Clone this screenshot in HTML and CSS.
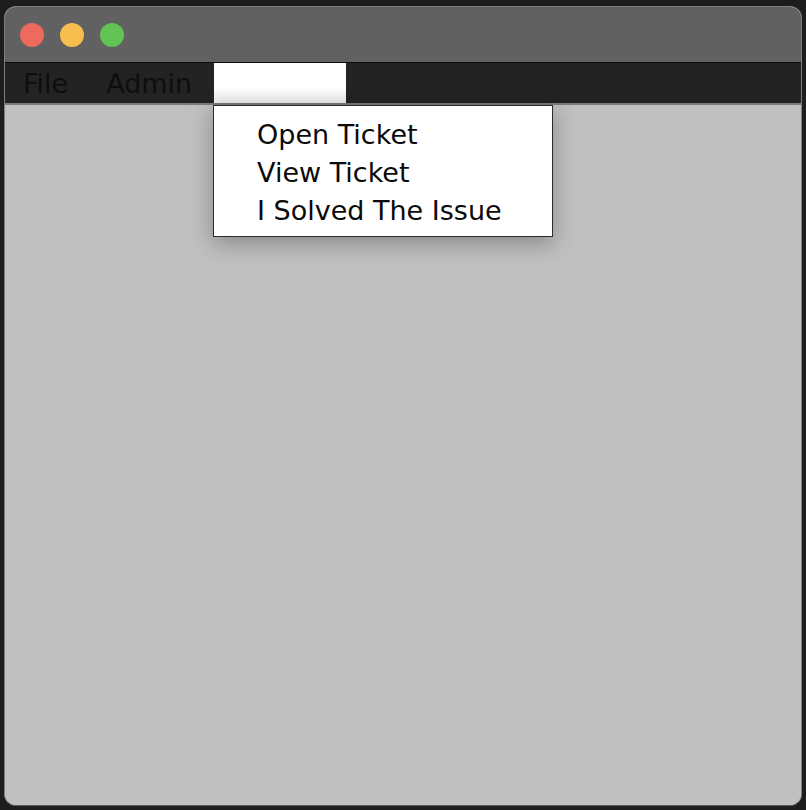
FILE: index.html
```html
<!DOCTYPE html>
<html>
<head>
<meta charset="utf-8">
<link rel="stylesheet" href="styles.css">
</head>
<body>
<div class="window">
  <div class="titlebar">
    <span class="light red"></span>
    <span class="light yellow"></span>
    <span class="light green"></span>
  </div>
  <div class="menubar">
    <span class="menu file">File</span>
    <span class="menu admin">Admin</span>
    <span class="menu selected"></span>
  </div>
  <div class="content"></div>
  <div class="popup">
    <div class="item">Open Ticket</div>
    <div class="item">View Ticket</div>
    <div class="item">I Solved The Issue</div>
  </div>
</div>
</body>
</html>
```
FILE: styles.css
```css
html, body {
  margin: 0;
  padding: 0;
  background: #1d1d1d;
  width: 806px;
  height: 810px;
  overflow: hidden;
  font-family: "DejaVu Sans", "Liberation Sans", sans-serif;
}
.window {
  position: relative;
  margin: 6px 4px 0 4px;
  height: 800px;
  box-sizing: border-box;
  border: 1px solid #7e7e7e;
  border-bottom-color: #5a5a5a;
  border-radius: 12px;
  overflow: hidden;
  background: #c0c0c0;
  display: flex;
  flex-direction: column;
}
.titlebar {
  height: 55px;
  background: #616161;
  border-bottom: 1px solid #0b0b0b;
  display: flex;
  align-items: center;
  gap: 16px;
  padding-left: 15px;
  flex-shrink: 0;
}
.light {
  width: 24px;
  height: 24px;
  border-radius: 50%;
  display: block;
}
.red { background: #ee6a5f; }
.yellow { background: #f5be4f; }
.green { background: #61c454; }
.menubar {
  height: 40px;
  background: #232323;
  border-bottom: 2px solid #7b7b7b;
  display: flex;
  align-items: stretch;
  flex-shrink: 0;
}
.menu {
  font-size: 27px;
  color: #0e0e0e;
  display: flex;
  align-items: center;
  padding-top: 1px;
}
.file { margin-left: 18px; }
.admin { margin-left: 38px; }
.selected {
  margin-left: 22px;
  width: 132px;
  background: linear-gradient(#ffffff 0%, #ffffff 60%, #ececec 100%);
}
.content {
  flex: 1;
  background: #c0c0c0;
}
.popup {
  position: absolute;
  left: 208px;
  top: 98px;
  width: 340px;
  height: 132px;
  box-sizing: border-box;
  background: #ffffff;
  border: 1px solid #2b2b2b;
  box-shadow: 0 6px 22px rgba(0, 0, 0, 0.3);
  padding: 10px 0 0 43px;
}
.item {
  font-size: 27px;
  line-height: 38px;
  color: #0a0a0a;
}
```
